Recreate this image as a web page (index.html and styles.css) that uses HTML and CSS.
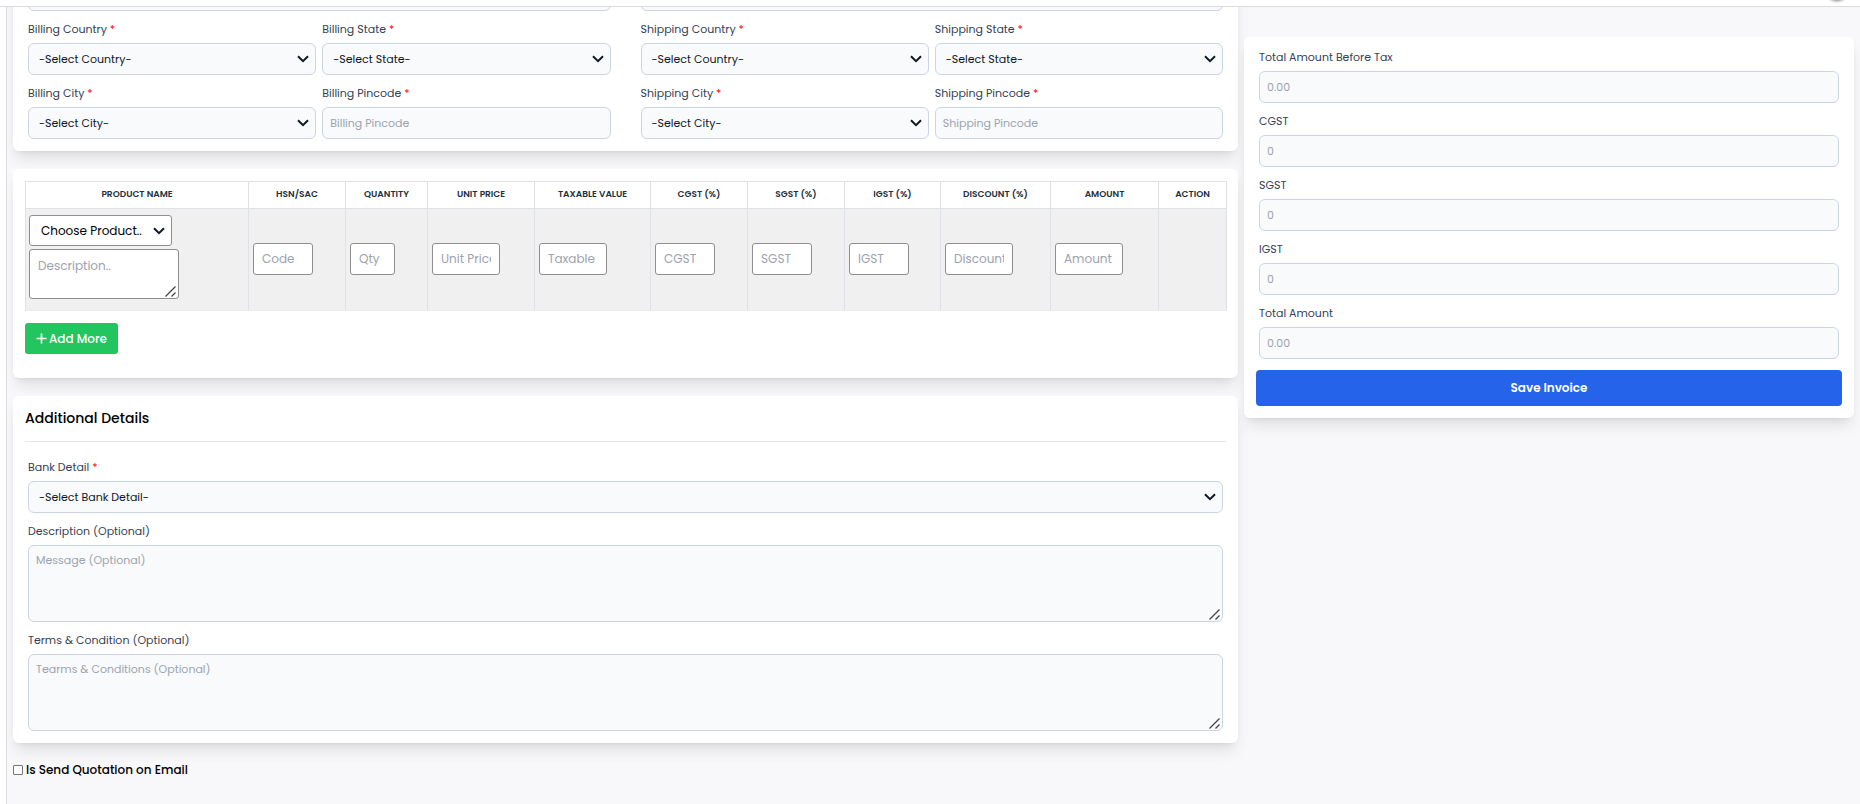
FILE: index.html
```html
<!DOCTYPE html>
<html lang="en">
<head>
<meta charset="utf-8">
<title>Create Invoice</title>
<link rel="stylesheet" href="styles.css">
</head>
<body>
<header class="topbar"><button class="avatar" type="button" aria-label="Account"></button></header>
<div class="shell">
<aside class="rail"></aside>
<form class="page">
  <div class="main-col">
    <section class="card card-address">
      <div class="group">
        <div class="field wide"><input class="control" type="text" aria-label="Billing Address"></div>
        <div class="field"><label for="bcountry">Billing Country <span class="req">*</span></label><select class="control" id="bcountry"><option>-Select Country-</option></select></div>
        <div class="field"><label for="bstate">Billing State <span class="req">*</span></label><select class="control" id="bstate"><option>-Select State-</option></select></div>
        <div class="field"><label for="bcity">Billing City <span class="req">*</span></label><select class="control" id="bcity"><option>-Select City-</option></select></div>
        <div class="field"><label for="bpin">Billing Pincode <span class="req">*</span></label><input class="control" id="bpin" type="text" placeholder="Billing Pincode"></div>
      </div>
      <div class="group">
        <div class="field wide"><input class="control" type="text" aria-label="Shipping Address"></div>
        <div class="field"><label for="scountry">Shipping Country <span class="req">*</span></label><select class="control" id="scountry"><option>-Select Country-</option></select></div>
        <div class="field"><label for="sstate">Shipping State <span class="req">*</span></label><select class="control" id="sstate"><option>-Select State-</option></select></div>
        <div class="field"><label for="scity">Shipping City <span class="req">*</span></label><select class="control" id="scity"><option>-Select City-</option></select></div>
        <div class="field"><label for="spin">Shipping Pincode <span class="req">*</span></label><input class="control" id="spin" type="text" placeholder="Shipping Pincode"></div>
      </div>
    </section>

    <section class="card card-items">
      <table class="items">
        <colgroup><col class="c-name"><col class="c-pct"><col class="c-qty"><col class="c-price"><col class="c-tax"><col class="c-pct"><col class="c-pct"><col class="c-igst"><col class="c-disc"><col class="c-amt"><col class="c-act"></colgroup>
        <thead>
          <tr><th>PRODUCT NAME</th><th>HSN/SAC</th><th>QUANTITY</th><th>UNIT PRICE</th><th>TAXABLE VALUE</th><th>CGST (%)</th><th>SGST (%)</th><th>IGST (%)</th><th>DISCOUNT (%)</th><th>AMOUNT</th><th>ACTION</th></tr>
        </thead>
        <tbody>
          <tr>
            <td class="product"><select class="cell product-select" aria-label="Product"><option>Choose Product..</option></select><textarea class="cell product-text" aria-label="Description" placeholder="Description.."></textarea></td>
            <td><input class="cell w-md" type="text" aria-label="HSN/SAC" placeholder="Code"></td>
            <td><input class="cell w-sm" type="text" aria-label="Quantity" placeholder="Qty"></td>
            <td><input class="cell w-lg" type="text" aria-label="Unit Price" placeholder="Unit Price"></td>
            <td><input class="cell w-lg" type="text" aria-label="Taxable Value" placeholder="Taxable"></td>
            <td><input class="cell w-md" type="text" aria-label="CGST" placeholder="CGST"></td>
            <td><input class="cell w-md" type="text" aria-label="SGST" placeholder="SGST"></td>
            <td><input class="cell w-md" type="text" aria-label="IGST" placeholder="IGST"></td>
            <td><input class="cell w-lg" type="text" aria-label="Discount" placeholder="Discount"></td>
            <td><input class="cell w-lg" type="text" aria-label="Amount" placeholder="Amount"></td>
            <td></td>
          </tr>
        </tbody>
      </table>
      <button class="add" type="button"><svg width="11" height="11" viewBox="0 0 11 11" aria-hidden="true"><path d="M5.5 1.2v8.6M1.2 5.5h8.6" fill="none" stroke="currentColor" stroke-width="1.7" stroke-linecap="round"/></svg>Add More</button>
    </section>

    <section class="card card-details">
      <h2>Additional Details</h2>
      <div class="stack">
        <div class="field"><label for="bank">Bank Detail <span class="req">*</span></label><select class="control" id="bank"><option>-Select Bank Detail-</option></select></div>
        <div class="field"><label for="desc">Description (Optional)</label><textarea class="control area" id="desc" placeholder="Message (Optional)"></textarea></div>
        <div class="field"><label for="terms">Terms &amp; Condition (Optional)</label><textarea class="control area" id="terms" placeholder="Tearms &amp; Conditions (Optional)"></textarea></div>
      </div>
    </section>

    <label class="send"><input type="checkbox">Is Send Quotation on Email</label>
  </div>

  <aside class="card card-totals">
    <div class="stack">
      <div class="field"><label for="before">Total Amount Before Tax</label><input class="control" id="before" type="text" placeholder="0.00"></div>
      <div class="field"><label for="cgst">CGST</label><input class="control" id="cgst" type="text" placeholder="0"></div>
      <div class="field"><label for="sgst">SGST</label><input class="control" id="sgst" type="text" placeholder="0"></div>
      <div class="field"><label for="igst">IGST</label><input class="control" id="igst" type="text" placeholder="0"></div>
      <div class="field"><label for="total">Total Amount</label><input class="control" id="total" type="text" placeholder="0.00"></div>
    </div>
    <button class="save" type="submit">Save Invoice</button>
  </aside>
</form>
</div>
</body>
</html>
```
FILE: styles.css
```css
*, *::before, *::after { box-sizing: border-box; }

html, body { height: 100%; }

body {
  margin: 0;
  display: flex;
  flex-direction: column;
  overflow: hidden;
  background: #fff;
  color: #000;
  font-family: "Poppins", "Inter", "Open Sans", sans-serif;
  font-size: 12px;
}

input, select, textarea, button { margin: 0; font: inherit; }

/* Top bar */
.topbar {
  position: relative;
  z-index: 2;
  flex: none;
  display: flex;
  justify-content: flex-end;
  align-items: flex-end;
  height: 7px;
  padding: 0 12px 6px;
  border-bottom: 1px solid #d9dbdf;
  background: #fff;
}

.avatar {
  flex: none;
  width: 22px;
  height: 22px;
  padding: 0;
  border: 0;
  border-radius: 50%;
  background: #fff;
  box-shadow: 0 1px 3px rgba(0, 0, 0, .5);
}

.shell { flex: 1; min-height: 0; display: flex; }

.rail { flex: none; width: 7px; border-right: 1px solid #dcdee2; }

.page {
  flex: 1;
  min-width: 0;
  display: grid;
  grid-template-columns: 1225fr 610fr;
  gap: 6px;
  align-items: start;
  padding: 0 6px;
  background: #f8f8fa;
}

/* Cards */
.card {
  padding: 12px;
  border-radius: 6px;
  background: #fff;
  box-shadow: 0 10px 15px -3px rgba(0, 0, 0, .1), 0 4px 6px -4px rgba(0, 0, 0, .1);
}

.main-col { display: flex; flex-direction: column; gap: 18px; min-width: 0; }

.card-address {
  display: grid;
  grid-template-columns: 1fr 1fr;
  gap: 24px;
  margin-top: -40px;
}

.group {
  display: grid;
  grid-template-columns: 1fr 1fr;
  gap: 10px 6px;
  padding: 0 3px;
}

.wide { grid-column: 1 / -1; }

/* Form fields */
.field { display: flex; flex-direction: column; gap: 6px; min-width: 0; }

.field label { color: #334155; font-size: 11px; line-height: 16px; }

.req { color: #f00; }

.control {
  width: 100%;
  height: 32px;
  padding: 0 7px;
  border: 1px solid #cbd5e1;
  border-radius: 6px;
  background: #f8fafc;
  color: #0f172a;
  font-size: 11px;
}

select {
  appearance: none;
  background-image: url("data:image/svg+xml,%3Csvg xmlns='http://www.w3.org/2000/svg' viewBox='0 0 12 8'%3E%3Cpath d='M1 1.2L6 6.2L11 1.2' fill='none' stroke='%23101828' stroke-width='2'/%3E%3C/svg%3E") !important;
  background-position: right 6px center !important;
  background-repeat: no-repeat !important;
  background-size: 12px 8px !important;
}

select.control { padding: 0 24px 0 10px; }

::placeholder { color: #9ca3af; opacity: 1; }

textarea::-webkit-resizer {
  background: url("data:image/svg+xml,%3Csvg xmlns='http://www.w3.org/2000/svg' viewBox='0 0 15 15'%3E%3Cpath d='M2.5 13.5L12.5 3.5M8.5 13.5L12.5 9.5' fill='none' stroke='%23444' stroke-width='1.3'/%3E%3C/svg%3E") right bottom / 15px 15px no-repeat;
}

.area { height: 77px; padding: 6px 7px; line-height: 16px; }

/* Item table */
.card-items { padding-bottom: 24px; }

.items {
  width: 100%;
  table-layout: fixed;
  border-collapse: collapse;
}

.c-name { width: 223px; }
.c-pct { width: 97px; }
.c-qty { width: 82px; }
.c-price { width: 107px; }
.c-tax { width: 116px; }
.c-igst { width: 96px; }
.c-disc { width: 110px; }
.c-amt { width: 108px; }
.c-act { width: 68px; }

.items th {
  height: 27px;
  padding: 0 0 2px;
  border: 1px solid #dee2e6;
  color: #212f3f;
  font-size: 9px;
  font-weight: 600;
}

.items td {
  height: 102px;
  padding: 0 4px 2px;
  border: 1px solid #dee2e6;
  border-bottom-color: #e8eaed;
  background: #f0f0f0;
  vertical-align: middle;
}

.items .product { padding: 6px 3px; vertical-align: top; }

.cell {
  display: block;
  height: 32px;
  padding: 0 8px;
  border: 1px solid #8f8f8f;
  border-radius: 3px;
  background: #fff;
  color: #000;
  font-size: 12px;
}

.w-sm { width: 45px; }
.w-md { width: 60px; }
.w-lg { width: 68px; }

.product-select { width: 143px; height: 31px; padding: 0 24px 0 11px; }

.product-text { width: 150px; height: 50px; margin-top: 3px; padding: 7px 8px; line-height: 18px; }

.add {
  display: flex;
  align-items: center;
  gap: 2px;
  height: 31px;
  margin-top: 12px;
  padding: 0 11px;
  border: 0;
  border-radius: 3px;
  background: #22c55e;
  color: #fff;
  font-weight: 500;
}

/* Additional details */
.card-details h2 {
  margin: 0;
  padding-bottom: 13px;
  border-bottom: 1px solid #e5e7eb;
  font-size: 14px;
  font-weight: 500;
  line-height: 20px;
}

.stack { display: grid; gap: 10px; padding: 0 3px; }

.card-details .stack { padding-top: 17px; }

.send {
  display: flex;
  align-items: center;
  gap: 3px;
  line-height: 18px;
  font-weight: 500;
}

.send input {
  appearance: none;
  width: 10px;
  height: 10px;
  border: 1px solid #767676;
  border-radius: 1px;
  background: #fff;
}

.send input:checked { background: #2563eb; }

/* Totals */
.card-totals { margin-top: 30px; }

.card-totals .stack { padding: 0 3px; }

.save {
  width: 100%;
  height: 36px;
  margin-top: 11px;
  border: 0;
  border-radius: 4px;
  background: #2563eb;
  color: #fff;
  font-weight: 600;
}
```
